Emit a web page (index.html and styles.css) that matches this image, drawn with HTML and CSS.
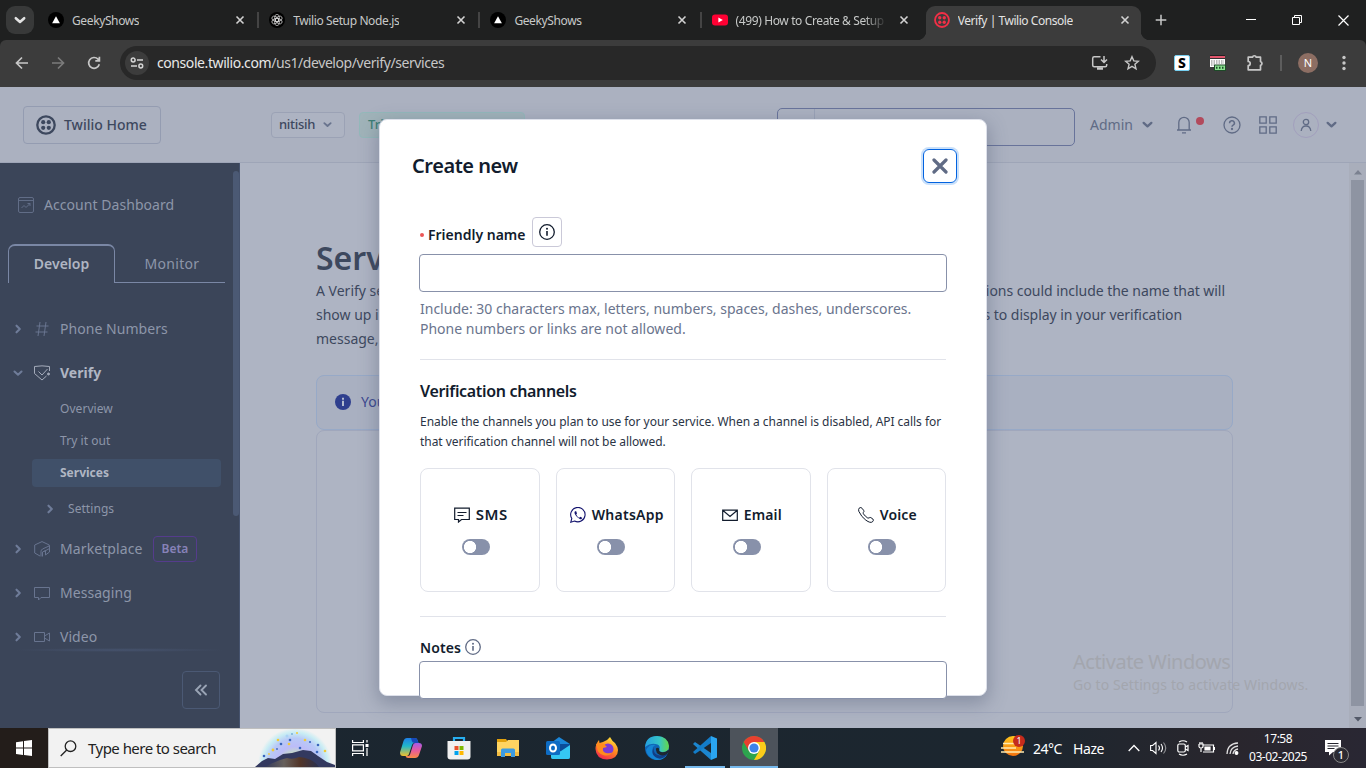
FILE: index.html
```html
<!DOCTYPE html>
<html lang="en">
<head>
<meta charset="utf-8">
<title>Verify | Twilio Console</title>
<link rel="stylesheet" href="styles.css">
</head>
<body>
<svg class="defs" aria-hidden="true">
  <symbol id="x" viewBox="0 0 10 10"><path d="M1.500 1.500l7 7M8.500 1.500l-7 7" fill="none" stroke="currentColor" stroke-width="1.600"/></symbol>
  <symbol id="down" viewBox="0 0 10 10"><path d="M1.500 3.500L5 6.700l3.500-3.200" fill="none" stroke="currentColor" stroke-width="2.100" stroke-linecap="round" stroke-linejoin="round"/></symbol>
  <symbol id="right" viewBox="0 0 10 10"><path d="M3.500 1.700L6.800 5 3.500 8.300" fill="none" stroke="currentColor" stroke-width="2.100" stroke-linecap="round" stroke-linejoin="round"/></symbol>
  <symbol id="info" viewBox="0 0 16 16"><circle cx="8" cy="8" r="7.300" fill="none" stroke="currentColor" stroke-width="1.300"/><circle cx="8" cy="4.800" r="1" fill="currentColor"/><path d="M8 7v4.700" stroke="currentColor" stroke-width="1.600"/></symbol>
  <symbol id="twilio" viewBox="0 0 20 20"><circle cx="10" cy="10" r="8.700" fill="none" stroke="currentColor" stroke-width="2.300"/><g fill="currentColor"><circle cx="7.200" cy="7.200" r="2.100"/><circle cx="12.800" cy="7.200" r="2.100"/><circle cx="7.200" cy="12.800" r="2.100"/><circle cx="12.800" cy="12.800" r="2.100"/></g></symbol>
  <symbol id="geeky" viewBox="0 0 16 16"><circle cx="8" cy="8" r="8" fill="#000"/><path d="M8 4.300l3.900 6.900H4.100z" fill="#fff"/></symbol>
</svg>

<div class="tabstrip">
  <div class="tab-search"><svg width="12" height="12"><use href="#down"/></svg></div>
  <div class="tab"><svg class="fav"><use href="#geeky"/></svg><span>GeekyShows</span><svg class="tab-x"><use href="#x"/></svg></div>
  <div class="tab"><svg class="fav" viewBox="0 0 16 16"><circle cx="8" cy="8" r="8" fill="#000"/><g fill="none" stroke="#d8d8d8" stroke-width=".7"><ellipse cx="8" cy="6" rx="2.400" ry="3.700" transform="rotate(60 8 8)"/><ellipse cx="8" cy="6" rx="2.400" ry="3.700" transform="rotate(120 8 8)"/><ellipse cx="8" cy="6" rx="2.400" ry="3.700" transform="rotate(180 8 8)"/><ellipse cx="8" cy="6" rx="2.400" ry="3.700" transform="rotate(240 8 8)"/><ellipse cx="8" cy="6" rx="2.400" ry="3.700" transform="rotate(300 8 8)"/><ellipse cx="8" cy="6" rx="2.400" ry="3.700"/></g></svg><span>Twilio Setup Node.js</span><svg class="tab-x"><use href="#x"/></svg></div>
  <div class="tab"><svg class="fav"><use href="#geeky"/></svg><span>GeekyShows</span><svg class="tab-x"><use href="#x"/></svg></div>
  <div class="tab last"><svg class="fav" viewBox="0 0 16 16"><rect y="2.500" width="16" height="11" rx="3" fill="#f03"/><path d="M6.400 5.500v5L10.800 8z" fill="#fff"/></svg><span class="fade">(499) How to Create &amp; Setup</span><svg class="tab-x"><use href="#x"/></svg></div>
  <div class="tab active"><svg class="fav red"><use href="#twilio" width="16" height="16"/></svg><span>Verify | Twilio Console</span><svg class="tab-x"><use href="#x"/></svg></div>
  <svg class="plus" viewBox="0 0 12 12"><path d="M6 .7v10.600M.7 6h10.600" stroke="#c7c7c7" stroke-width="1.500"/></svg>
  <div class="win-buttons">
    <svg width="10" height="10"><path d="M0 4.500h10" stroke="#fff"/></svg>
    <svg width="10" height="10"><path d="M.5 2.500h7v7h-7zM2.500 2.500v-2h7v7h-2" fill="none" stroke="#fff"/></svg>
    <svg width="11" height="11"><path d="M.5.5l10 10M10.500.5l-10 10" stroke="#fff" stroke-width="1.200"/></svg>
  </div>
</div>

<div class="toolbar">
  <svg class="nav-i" viewBox="0 0 16 16"><path d="M14 8H3M8 2.500L2.500 8 8 13.500"/></svg>
  <svg class="nav-i dim" viewBox="0 0 16 16"><path d="M2 8h11M8 2.500L13.500 8 8 13.500"/></svg>
  <svg class="nav-i" viewBox="0 0 16 16"><path d="M13.300 9.300A5.400 5.400 0 1 1 12 4.200l1.300 1.300M13.400 1.800v4H9.300"/></svg>
  <div class="address">
    <div class="site"><svg width="14" height="12" viewBox="0 0 14 12" fill="none" stroke="#d5d5d5" stroke-width="1.500"><circle cx="3.200" cy="3" r="1.900"/><path d="M7 3h6M1 9h6"/><circle cx="10.800" cy="9" r="1.900"/></svg></div>
    <div class="url">console.twilio.com<span>/us1/develop/verify/services</span></div>
    <svg width="18" height="16" viewBox="0 0 18 16" fill="none" stroke="#c7c7c7" stroke-width="1.500"><path d="M9.500 1.700H3.200Q1.700 1.700 1.700 3.200v7q0 1.500 1.500 1.500h11q1.500 0 1.500-1.500V9M13 1v6.300M10 4.500l3 3 3-3"/><path d="M6 13.500h6" stroke-width="2.500"/></svg>
    <svg width="16" height="16" viewBox="0 0 16 16" fill="none" stroke="#c7c7c7" stroke-width="1.400"><path d="M8 1.700l1.800 4.200 4.600.4-3.500 3 1.100 4.500L8 11.400l-4 2.400 1.100-4.500-3.500-3 4.600-.4z"/></svg>
  </div>
  <div class="ext-s">S</div>
  <svg class="ext-c" width="16" height="16"><rect width="15" height="4" fill="#e2566d"/><path d="M0 .5h15" stroke="#222"/><path d="M0 3.500h15" stroke="#333"/><rect y="4" width="15" height="8" fill="#fff"/><path d="M1 6h13M1 8h13M1 10h3" stroke="#777" stroke-dasharray="1.500 1"/><rect x="4" y="9.500" width="12" height="6.500" fill="#1e4a28"/><rect x="5" y="10.500" width="10" height="4.500" fill="#8be28f"/><path d="M6 12.700h8" stroke="#1e4a28" stroke-width="2" stroke-dasharray="1.500 1.500"/></svg>
  <svg class="puzzle" width="18" height="18" viewBox="0 0 18 18"><path d="M2.200 3.200h4.300a1.900 1.900 0 0 1 3.700 0h4.300v4.400a1.900 1.900 0 0 1 0 3.700v4.500H2.200v-4.300a2 2 0 0 0 0-4z" fill="none" stroke="#c7c7c7" stroke-width="1.700" stroke-linejoin="round"/></svg>
  <i class="bar"></i>
  <div class="me">N</div>
  <svg class="dots" width="4" height="16" fill="#c7c7c7"><circle cx="2" cy="2.500" r="1.700"/><circle cx="2" cy="8" r="1.700"/><circle cx="2" cy="13.500" r="1.700"/></svg>
</div>

<div class="page">
  <header class="top">
    <div class="home"><svg width="20" height="20"><use href="#twilio"/></svg>Twilio Home</div>
    <div class="account">nitisih<svg width="9" height="9"><use href="#down"/></svg></div>
    <div class="trial">Trial</div>
    <div class="search"><i></i></div>
    <div class="admin">Admin<svg width="11" height="11"><use href="#down"/></svg></div>
    <svg class="bell" width="28" height="20" viewBox="0 0 28 20"><path d="M1 15h14M2.800 15V7.500a5.200 5.200 0 0 1 10.400 0V15M6 17.800h4" fill="none" stroke="currentColor" stroke-width="1.300"/><circle cx="24" cy="6" r="4" fill="#b24a5c"/></svg>
    <svg class="help" width="18" height="18" viewBox="0 0 18 18" fill="none" stroke="currentColor" stroke-width="1.300"><circle cx="9" cy="9" r="8"/><path d="M6.600 7.200a2.400 2.400 0 1 1 3.500 2q-1.100.6-1.100 1.600" stroke-width="1.500"/><circle cx="9" cy="13" r=".5"/></svg>
    <svg class="apps" width="18" height="18" fill="none" stroke="currentColor" stroke-width="1.300"><path d="M.8.8h6.400v6.400H.8zM10.800.8h6.400v6.400h-6.400zM.8 10.800h6.400v6.400H.8zM10.800 10.800h6.400v6.400h-6.400z"/></svg>
    <div class="user"><svg width="14" height="14" viewBox="0 0 14 14" fill="none" stroke="currentColor" stroke-width="1.300"><circle cx="7" cy="4" r="2.700"/><path d="M2.200 13q.5-5 4.800-5t4.800 5"/></svg></div>
    <svg class="user-down" width="11" height="11"><use href="#down"/></svg>
  </header>

  <div class="cols">
    <aside class="side">
      <div class="dash"><svg width="16" height="16" fill="none" stroke="currentColor"><rect x=".5" y=".5" width="15" height="15" rx="1.500"/><path d="M1 3.500h14M3.500 11l2.500-2.500 2 2 4-4M9.500 6.500H12V9"/></svg><span>Account Dashboard</span></div>
      <div class="side-tabs"><div class="on">Develop</div><div class="off">Monitor</div></div>
      <nav>
        <div class="row"><svg class="chev"><use href="#right"/></svg><svg class="ic" viewBox="0 0 16 16"><path d="M6 1L4 15M12 1l-2 14M2.500 5h12M1.500 11h12"/></svg><span>Phone Numbers</span></div>
        <div class="row open"><svg class="chev"><use href="#down"/></svg><svg class="ic lit" viewBox="0 0 16 16"><path d="M15.500 6V1.500Q8 .2.500 1.500V8.500L8 15l4.500-4M4.500 6.500L8 10l5.500-6"/><circle cx="14.500" cy="9" r="1" fill="currentColor"/></svg><span>Verify</span></div>
        <div class="sub">Overview</div>
        <div class="sub">Try it out</div>
        <div class="sub sel">Services</div>
        <div class="sub more"><svg class="chev"><use href="#right"/></svg>Settings</div>
        <div class="row"><svg class="chev"><use href="#right"/></svg><svg class="ic" viewBox="0 0 16 16"><path d="M6 15l-5.300-3V4L8 .6 15.300 4v1.500M7 15.500V10.500Q7 9 8.500 8L15.500 4.800V11l-4 3V9.500L8.500 11v4.500M15.500 7.500L10 10.500"/></svg><span class="mk">Marketplace</span><b class="beta">Beta</b></div>
        <div class="row"><svg class="chev"><use href="#right"/></svg><svg class="ic" viewBox="0 0 16 16"><path d="M.5 2.500h15v10H7L4.500 15v-2.500h-4z"/></svg><span>Messaging</span></div>
        <div class="row"><svg class="chev"><use href="#right"/></svg><svg class="ic" viewBox="0 0 16 16"><path d="M.5 3.500h10v9H.5zM10.500 7l5-3v8l-5-3"/></svg><span>Video</span></div>
      </nav>
      <i class="edge"></i>
      <div class="collapse"><svg width="14" height="12" viewBox="0 0 14 12"><path d="M6.500 1.500L2 6l4.500 4.500M12 1.500L7.500 6l4.500 4.500" fill="none" stroke="#9aa4b5" stroke-width="1.900" stroke-linecap="round"/></svg></div>
      <i class="thumb"></i>
    </aside>

    <main class="main">
      <h1>Services</h1>
      <div class="line"><span>A Verify se</span><span class="r1">ions could include the name that will</span></div>
      <div class="line"><span>show up i</span><span class="r2">s to display in your verification</span></div>
      <div class="line"><span>message,</span></div>
      <div class="alert"><svg width="16" height="16"><circle cx="8" cy="8" r="8" fill="#2f3f8e"/><path d="M8 6.800V12M8 3.800v2" stroke="#b4bccf" stroke-width="2"/></svg>You</div>
      <div class="empty"></div>
    </main>
    <div class="scroll"><svg width="10" height="5"><path d="M5 0l4 4.500H1z" fill="#7b8190"/></svg><i></i><svg width="10" height="5"><path d="M1 0h8L5 4.500z" fill="#535968"/></svg></div>
  </div>

  <section class="modal">
    <div class="m-head"><h2>Create new</h2><div class="close"><svg width="16" height="16"><path d="M2 2l12 12M14 2L2 14" stroke="#606b85" stroke-width="3.200" stroke-linecap="round"/></svg></div></div>
    <div class="m-body">
      <div class="label first"><i class="req"></i><span>Friendly name</span><div class="info-btn"><svg width="16" height="16"><use href="#info"/></svg></div></div>
      <div class="input"></div>
      <p class="help-text">Include: 30 characters max, letters, numbers, spaces, dashes, underscores.<br>Phone numbers or links are not allowed.</p>
      <hr>
      <h3>Verification channels</h3>
      <p class="desc">Enable the channels you plan to use for your service. When a channel is disabled, API calls for<br>that verification channel will not be allowed.</p>
      <div class="cards">
        <div class="card"><div class="ch sms"><svg width="16" height="16" viewBox="0 0 16 16"><path d="M.7 1.200h14.600v11.300H7.500L4.500 15v-2.500H.7zM3.500 5.500h9M3.500 8.500h6"/></svg><span>SMS</span></div><i class="toggle"></i></div>
        <div class="card"><div class="ch wa"><svg width="16" height="16" viewBox="0 0 16 16" class="navy"><path d="M.8 15.200l1-3.700A7.200 7.200 0 1 1 4.500 14z" stroke-width="1.100"/><path d="M5.200 4.200q-1.500 1 .2 3.800t4.700 4.300q1.700.2 2.100-1.500l-2-1.100-1 1Q7.500 10 6.200 7.400l.8-1-.8-2.200z" fill="#14146e" stroke="none"/></svg><span>WhatsApp</span></div><i class="toggle"></i></div>
        <div class="card"><div class="ch"><svg width="16" height="16" viewBox="0 0 16 16"><path d="M.7 3.200h14.600v10.100H.7zM1 3.500l7 6 7-6"/></svg><span>Email</span></div><i class="toggle"></i></div>
        <div class="card"><div class="ch"><svg width="16" height="16" viewBox="0 0 16 16"><path d="M1 1.300Q3-.5 4.300 1.500l1.500 2.200q.5 1-.5 1.700-1 .8 2 3.700t3.800 1.900q.7-1 1.700-.4l2.100 1.400q1.300 1.100-.5 2.900-2 1.500-6.500-1.700T.8 4.300Q.3 2.300 1 1.300z" stroke-width="1"/></svg><span>Voice</span></div><i class="toggle"></i></div>
      </div>
      <hr class="second">
      <div class="label notes"><span>Notes</span><svg width="16" height="16"><use href="#info"/></svg></div>
      <div class="input"></div>
    </div>
  </section>

  <div class="watermark"><div>Activate Windows</div><p>Go to Settings to activate Windows.</p></div>
</div>

<div class="taskbar">
  <div class="start"><svg width="16" height="16" fill="#fff"><path d="M0 2.200L7 1.200v6.400H0zM8 1.100L16 0v7.600H8zM0 8.500h7v6.400l-7-1zM8 8.500h8V16l-8-1.100z"/></svg></div>
  <div class="task-search">
    <svg width="17" height="17" viewBox="0 0 17 17" fill="none" stroke="#222" stroke-width="1.300"><circle cx="10.500" cy="6.200" r="5.300"/><path d="M6.700 10L.7 16"/></svg>
    <span>Type here to search</span>
    <svg class="hills" width="80" height="38" viewBox="0 0 80 38">
      <defs><radialGradient id="glow" gradientUnits="userSpaceOnUse" cx="40" cy="36" r="37"><stop offset=".3" stop-color="#c8ddc0"/><stop offset=".5" stop-color="#bcbcf8"/><stop offset=".72" stop-color="#b8c9f7"/><stop offset=".88" stop-color="#c9edf4"/><stop offset="1" stop-color="#f1f2f2"/></radialGradient><linearGradient id="hill"><stop offset="0" stop-color="#343a5a"/><stop offset=".35" stop-color="#67605c"/><stop offset=".65" stop-color="#523528"/><stop offset="1" stop-color="#29304e"/></linearGradient></defs>
      <path d="M2 38Q4 0 40 0t38 38z" fill="url(#glow)"/>
      <path d="M0 38l7-6 6-3 7 1 8-5 9-1 11-3 8 1 7 5 9 6 8 3v2z" fill="#33395f"/>
      <path d="M10 38q12-7 22-9 6 2 12-1 14 1 20 10z" fill="url(#hill)"/>
      <g fill="#3b66bd"><circle cx="9" cy="27" r="1.300"/><circle cx="26" cy="15" r="1.300"/><circle cx="35" cy="11" r="1.300"/><circle cx="45" cy="19" r="1.300"/><circle cx="55" cy="13" r="1.100"/><circle cx="63" cy="16" r="1.300"/><circle cx="62" cy="23" r="1.300"/><circle cx="22" cy="20" r=".9"/><circle cx="37" cy="5" r="1" fill="#78b2d8"/><circle cx="32" cy="7" r="1.500" fill="#a9d3f5"/></g>
      <g fill="#f0c93a"><circle cx="18" cy="21" r="1.400"/><circle cx="23" cy="11" r="1.300"/><circle cx="34" cy="15" r="1.300"/><circle cx="50" cy="11" r="1.300"/><circle cx="70" cy="22" r="1.300"/><circle cx="14" cy="25" r=".9"/><circle cx="42" cy="4" r="1"/></g>
    </svg>
  </div>
  <div class="apps-row">
    <div><svg width="17" height="16" fill="none" stroke="#fff" stroke-width="1.200"><path d="M.6 0v2.500h10.800V0M.6 4.800h10.800v6H.6zM.6 16v-2.500h10.800V16M15 0v2.500M15 8v8"/><path d="M13.500 5.500h3" stroke-width="3"/></svg></div>
    <div class="cop"><svg width="24" height="24" viewBox="0 0 24 24"><defs><linearGradient id="c1" x1="0" y1="0" x2="0" y2="1"><stop offset="0" stop-color="#1f7fe8"/><stop offset=".45" stop-color="#20b7c9"/><stop offset="1" stop-color="#f2c12c"/></linearGradient><linearGradient id="c2" x1="0" y1="0" x2="0" y2="1"><stop offset="0" stop-color="#a45be8"/><stop offset=".5" stop-color="#e85b9c"/><stop offset="1" stop-color="#fb8a45"/></linearGradient></defs><path d="M8 2h8q2 0 2.500 2l1 3h-4q-2 0-2.500 2L10 18Q9.500 20 7.500 20H4q-3 0-3-3.500L4.500 5Q5.500 2 8 2z" fill="url(#c1)"/><path d="M12 2h4q2 0 2.500 2l1 3h-4q-2 0-2.700-2z" fill="#1748b8"/><path d="M20 7q3 0 3 3l-3 9q-1 3-4 3H9q-2 0-2.500-2h2.700q1.500 0 2-2L14 9q.5-2 2.500-2z" fill="url(#c2)"/></svg></div>
    <div><svg width="24" height="24" viewBox="0 0 24 24"><path d="M7 6V2h10v4" fill="none" stroke="#27aef0" stroke-width="2.200"/><path d="M.5 5h23v15.500q0 3-3 3h-17q-3 0-3-3z" fill="#f0f0f0"/><path d="M7.500 10h4v4h-4z" fill="#e8512b"/><path d="M12.500 10h4v4h-4z" fill="#7eb900"/><path d="M7.500 15h4v4h-4z" fill="#00a2ee"/><path d="M12.500 15h4v4h-4z" fill="#ffb800"/></svg></div>
    <div><svg width="22" height="20" viewBox="0 0 22 20"><path d="M0 1h9l2 3H0z" fill="#e2a10d"/><path d="M0 4h9l2-2h11v16H0z" fill="#ffd461"/><path d="M0 14h22v4H0z" fill="#f3bd43"/><path d="M4 19v-7q0-1.500 1.500-1.500h11q1.500 0 1.500 1.500v7h-4v-4H8v4z" fill="#3d9be0"/></svg></div>
    <div class="cop"><svg width="24" height="24" viewBox="0 0 24 24"><path d="M13 1l11 7v13q0 2-2 2H7q-2 0-2-2V7z" fill="#1a86d9"/><path d="M10 8h14v7l-8 5-5-3z" fill="#0b4c99"/><path d="M5 19l10-4 9-6v12q0 2-2 2H7q-2 0-2-2z" fill="#35c7f3"/><rect x="0" y="5" width="14" height="14" rx="1.500" fill="#0e6cc4"/><ellipse cx="7" cy="12" rx="3" ry="3.500" fill="none" stroke="#fff" stroke-width="2"/></svg></div>
    <div><svg width="24" height="24" viewBox="0 0 24 24"><defs><linearGradient id="ff" x1=".8" y1="0" x2=".3" y2="1"><stop offset="0" stop-color="#ffe83d"/><stop offset=".5" stop-color="#ff8a1f"/><stop offset="1" stop-color="#f2264f"/></linearGradient></defs><path d="M15 1q2 4 5 6 3 4 3 7 0 9-11 9.500Q1 23 .5 13 .5 8 4 4l.5 3L8 6q4-1 7-5z" fill="url(#ff)"/><circle cx="13" cy="13" r="5.500" fill="#7b3ad6"/><path d="M1 8l3-1 5 1 3 3-4 1q-1 4 3 5t7-1q-4 5-10 3T2 11z" fill="#ff8b1e"/></svg></div>
    <div class="cop"><svg width="24" height="24" viewBox="0 0 24 24"><defs><linearGradient id="ed"><stop offset="0" stop-color="#249fe0"/><stop offset=".6" stop-color="#36c5c7"/><stop offset="1" stop-color="#65d847"/></linearGradient></defs><circle cx="12" cy="12" r="12" fill="#0f64b5"/><path d="M0 11Q1 0 12 0q11 .5 12 10 0 6-6.500 6-4 0-3-3 1-3-2-4.500Q6 6 0 11z" fill="url(#ed)"/><path d="M8 11q-2 6 3 10 5 2 11-2-4 6-12 4.800Q2 21 1 14q3-6 10-5-2 .5-3 2z" fill="#1484d4"/><path d="M9 11q-1.500 6 4 8 4 1.500 8-1.500l1.500.5Q17 25 11 21.500T9 11z" fill="#123e85"/><path d="M14.300 13q-1 3 3 3.300 3 .3 6-2.300l1.200 1-2.500 3q-4 2.500-8 .5t-2.700-6.500q2-1 3 1z" fill="#1e2830"/></svg></div>
    <div class="run"><svg width="24" height="24" viewBox="0 0 24 24"><path d="M0 8l2-2 16 11v7z" fill="#1c86cf"/><path d="M0 16l2 2 16-11V0z" fill="#137cc8"/><path d="M18 0l6 2.500v19L18 24z" fill="#2aa5f1"/></svg></div>
    <div class="run cur"><svg width="24" height="24" viewBox="0 0 24 24"><circle cx="12" cy="12" r="12" fill="#2da44e"/><path d="M1.600 6A12 12 0 0 1 22.400 6H12l-5 9z" fill="#e8402f"/><path d="M22.400 6A12 12 0 0 1 12 24l5.200-9L17 6z" fill="#fccb1a"/><path d="M12 6h10.400L17 13z" fill="#fccb1a"/><circle cx="12" cy="12" r="6" fill="#fff"/><circle cx="12" cy="12" r="4.600" fill="#3c82ea"/></svg></div>
  </div>
  <div class="tray">
    <svg class="weather" width="25" height="22" viewBox="0 0 25 22"><defs><linearGradient id="sun" x1="0" y1="0" x2="0" y2="1"><stop offset="0" stop-color="#ffc61d"/><stop offset="1" stop-color="#f3720f"/></linearGradient></defs><circle cx="12" cy="11" r="10" fill="url(#sun)"/><path d="M2 8.500h13M0 13h15M0 17h23" stroke="#ffeab0" stroke-width="1.700"/><circle cx="18" cy="6" r="6" fill="#c42b1c"/><text x="15.500" y="9.300" fill="#fff" font-size="9" font-family="Noto Sans">1</text></svg>
    <span class="temp">24°C</span><span class="haze">Haze</span>
    <svg class="t1" width="12" height="8"><path d="M.7 7L6 1.500 11.300 7" fill="none" stroke="#fff" stroke-width="1.300"/></svg>
    <svg class="t2" width="17" height="14" fill="none" stroke="#fff" stroke-width="1.100"><path d="M.6 4.500h2L6 1.500v11L2.600 9.500h-2zM8.500 4.500q2 2.500 0 5M11 3q3 4 0 8"/><path d="M13.500 1.500q4.500 5.500 0 11" opacity=".5"/></svg>
    <svg class="t3" width="12" height="16" fill="none" stroke="#fff" stroke-width="1.200"><rect x=".8" y="4" width="7.500" height="8" rx="1.500"/><path d="M8.300 7l2.700-1.500v5L8.300 9M2 2q4-2.500 8 0M2 14q4 2.500 8 0"/></svg>
    <svg class="t4" width="17" height="14" fill="none" stroke="#fff" stroke-width="1.200"><path d="M5 4h10.500v7H5M16.500 6v3M1 3v2.500q0 1.500 2 1.500t2-1.500V3H1M2 1v2M4 1v2M3 7v4"/><path d="M7 6h5v3H7z" fill="#fff"/></svg>
    <svg class="t5" width="13" height="13" fill="none" stroke="#fff" stroke-width="1.300"><path d="M1 12Q1.500 1.500 12 1M4 12q.5-7 8-8M7 12q.5-4 5-5" stroke-opacity=".85"/><circle cx="10.500" cy="11" r="1.300" fill="#fff"/></svg>
    <div class="clock">17:58<br>03-02-2025</div>
    <div class="note"><svg width="16" height="16"><path d="M0 0h16v12H8l-4 3.500V12H0z" fill="#fff"/><path d="M2.500 3.500h11M2.500 6h11M2.500 8.500h7" stroke="#26262f"/></svg><b>1</b></div>
  </div>
</div>
</body>
</html>
```
FILE: styles.css
```css
* { box-sizing: border-box; }
body {
  margin: 0; width: 1366px; height: 768px; overflow: hidden;
  display: flex; flex-direction: column;
  font: 14px "Noto Sans", sans-serif;
}
h1, h2, h3, p, hr { margin: 0; }
svg { display: block; flex: none; }
i { display: block; }
.defs { position: absolute; width: 0; height: 0; }

/* browser tabs */
.tabstrip { display: flex; height: 40px; background: #1f2020; color: #c7c9c8; font-size: 12px; letter-spacing: -.38px; flex: none; }
.tab-search { width: 28px; height: 28px; margin: 6px 4px 0 6px; border-radius: 9px; background: #383939; color: #e3e3e3; display: grid; place-items: center; }
.tab { position: relative; display: flex; align-items: center; width: 221.2px; padding: 0 14.200px 0 10px; }
.tab span { margin-left: 8px; margin-right: auto; white-space: nowrap; overflow: hidden; }
.tab:not(.last):not(.active)::after { content: ""; position: absolute; right: 0; top: 12px; width: 2px; height: 16px; background: #444; }
.tab .fade { width: 151px; -webkit-mask-image: linear-gradient(90deg, #000 85%, transparent); mask-image: linear-gradient(90deg, #000 85%, transparent); }
.fav { width: 16px; height: 16px; }
.fav.red { color: #f22f46; }
.tab-x { width: 10px; height: 10px; color: #d2d2d2; }
.tab.active { width: 215px; margin: 6px 0 0 3px; height: 34px; padding: 0 11px 6px 8px; border-radius: 9px 9px 0 0; background: #3c3c3c; color: #e3e3e3; letter-spacing: -.46px; }
.tab.active::before, .tab.active::after { content: ""; position: absolute; bottom: 0; width: 9px; height: 9px; }
.tab.active::before { left: -9px; background: radial-gradient(circle at 0 0, transparent 9px, #3c3c3c 9.5px); }
.tab.active::after { right: -9px; background: radial-gradient(circle at 100% 0, transparent 9px, #3c3c3c 9.5px); }
.plus { width: 12px; height: 12px; margin: 14px 0 0 14px; }
.win-buttons { display: flex; align-items: center; gap: 36px; margin-left: auto; padding-right: 17px; }

/* browser toolbar */
.toolbar { display: flex; align-items: center; height: 47px; background: #3c3c3c; padding: 0 20px 1px 14px; flex: none; border-radius: 6px 6px 0 0; box-shadow: 0 -8px 0 0 #1f2020; clip-path: inset(0); }
.tabstrip { position: relative; }
.nav-i { width: 16px; height: 16px; margin-right: 20px; fill: none; stroke: #c7c7c7; stroke-width: 1.7; }
.nav-i:nth-child(3) { margin-right: 18px; }
.nav-i.dim { stroke: #7b7b7b; }
.address { display: flex; align-items: center; width: 1036px; height: 34px; padding: 0 16px 0 5px; border-radius: 17px; background: #282828; }
.site { width: 24px; height: 24px; border-radius: 50%; background: #3c3c3c; display: grid; place-items: center; }
.url { margin: 0 auto 1px 8px; color: #e8e8e8; letter-spacing: -.42px; }
.url span { color: #c7c7c7; }
.address > svg:last-child { margin-left: 15px; }
.ext-s { width: 16px; height: 16px; margin-left: 18px; border: 1px solid #76cff0; border-radius: 2px; background: #fff; color: #000; font: 800 14px/14px "Noto Sans", sans-serif; text-align: center; }
.ext-c { margin-left: 20px; }
.puzzle { margin-left: 20px; }
.bar { width: 2px; height: 16px; margin-left: 16px; background: #5d5d5d; }
.me { width: 20px; height: 20px; margin-left: 16px; border-radius: 50%; background: #8d6e63; color: #fff; font-size: 11px; line-height: 20px; text-align: center; }
.dots { margin-left: 24px; }

/* console page */
.page { position: relative; height: 641px; flex: none; display: flex; flex-direction: column; background: #aeb4c3; overflow: hidden; }
.top { display: flex; align-items: center; height: 76px; flex: none; padding-left: 23px; background: #abb1c0; border-bottom: 1px solid #9ea5b7; color: #606b85; }
.home { display: flex; align-items: center; gap: 8px; width: 138px; height: 38px; padding-left: 12px; border: 1px solid #949cb1; border-radius: 4px; color: #3d485e; font-weight: 500; }
.account { display: flex; align-items: center; justify-content: space-between; width: 74px; height: 26px; margin-left: 110px; padding: 0 12px 1px 7px; border: 1px solid #9ba2b5; border-radius: 4px; background: #adb3c2; color: #3d485e; font-size: 13px; font-weight: 500; letter-spacing: -.3px; }
.account svg { color: #69748e; margin-top: 1px; }
.trial { width: 166px; height: 26px; margin-left: 14px; padding: 2px 8px; border: 1px solid #93b8ba; border-radius: 4px; background: #a0b3b9; color: #3c7d74; font-size: 13px; font-weight: 500; }
.search { width: 298px; height: 38px; margin: 4px 0 0 252px; border: 1px solid #68739a; border-radius: 5px; }
.search i { width: 37px; height: 36px; border-right: 1px solid #9aa2b6; }
.admin { display: flex; align-items: center; gap: 9px; margin-left: 15px; width: 86px; }
.bell { margin-left: 0; }
.help { margin-left: 19px; }
.apps { margin-left: 18px; }
.user { display: grid; place-items: center; width: 26px; height: 26px; margin-left: 16px; border: 1px solid #a29fbd; border-radius: 50%; }
.user-down { margin-left: 7px; }
.cols { display: flex; flex: 1; min-height: 0; }

/* sidebar */
.side { position: relative; width: 240px; background: #3b4559; border-right: 1px solid #46536e; color: #8d96a9; }
.dash { display: flex; align-items: center; gap: 10px; height: 20px; margin: 32px 0 29px 18px; }
.dash span, .row span { margin-top: -2px; letter-spacing: .05px; }
.dash svg { color: #616d87; }
.side-tabs { display: flex; height: 39px; margin-left: 8px; }
.side-tabs div { text-align: center; line-height: 39px; }
.side-tabs .on { width: 107px; border: 1px solid #7a87a5; border-top-width: 2px; border-bottom: 0; border-radius: 7px 7px 0 0; color: #b0b6c3; font-weight: 600; line-height: 35px; }
.side-tabs .off { width: 110px; border-bottom: 1px solid #7a87a5; padding-left: 4px; letter-spacing: .3px; }
.side nav { height: 371px; padding-top: 24px; margin-bottom: -6px; overflow: hidden; }
.row { display: flex; align-items: center; height: 44px; padding-left: 13px; }
.chev { width: 10px; height: 10px; margin-right: 11px; color: #6f7c99; }
.ic { width: 16px; height: 16px; margin-right: 10px; fill: none; stroke: currentColor; color: #68748f; }
.ic.lit { color: #a4abba; }
.open { font-weight: 700; color: #b0b6c3; }
.sub { height: 28px; margin: 4px 18px 0 32px; padding-left: 28px; line-height: 28px; font-size: 12px; letter-spacing: .06px; }
.open + .sub { margin-top: 0; }
.sub.sel { border-radius: 4px; background: #405069; color: #b0b6c3; font-weight: 700; line-height: 27px; letter-spacing: 0; }
.sub.more { display: flex; align-items: center; margin-top: 8px; margin-bottom: 4px; padding-left: 13px; }
.sub.more .chev { margin-right: 13px; }
.row .mk { letter-spacing: .1px; }
.beta { margin-left: 10px; padding: 0 8px; height: 26px; border: 1px solid #553c8c; border-radius: 4px; color: #8782b8; font-size: 12px; font-weight: 600; line-height: 23px; }
.edge { height: 4px; margin: 0 12px 0 12px; background: radial-gradient(ellipse at center, #46536e, transparent 70%); }
.collapse { display: grid; place-items: center; width: 38px; height: 38px; margin: 19px 0 0 182px; border: 1px solid #4b5974; border-radius: 4px; }
.thumb { position: absolute; right: 0; top: 8px; width: 6px; height: 345px; border-radius: 3px; background: #4b5974; }

/* main column */
.main { width: 1109px; padding: 75px 116px 0 76px; color: #3d485e; }
.main h1 { font-size: 32px; line-height: 40px; font-weight: 600; margin-bottom: 1px; }
.line { display: flex; justify-content: space-between; height: 24px; line-height: 24px; white-space: nowrap; }
.r1 { margin-right: 8px; letter-spacing: -.04px; }
.r2 { margin-right: 51px; letter-spacing: -.05px; }
.alert { display: flex; align-items: center; gap: 10px; height: 55px; margin-top: 24px; padding: 0 0 2px 18px; border: 1px solid #97a9c7; border-radius: 8px; background: #a9b0c1; color: #3a478f; }
.empty { height: 283px; border: 1px solid #a0a7bc; border-radius: 8px; }
.scroll { display: flex; flex-direction: column; align-items: center; width: 17px; padding: 7px 0 6px; background: #a9aebb; }
.scroll i { width: 13px; height: 526px; margin: 5px 0 auto; background: #8e94a2; }

/* dialog over the dimmed page */
.modal { position: absolute; left: 379px; top: 32px; width: 608px; height: 577px; border: 1px solid #dde0ea; border-radius: 8px; background: #fff; color: #121c2d; box-shadow: 0 6px 18px 2px rgba(75, 86, 113, .38); }
.m-head { display: flex; justify-content: space-between; align-items: center; height: 92px; padding: 0 29px 0 32px; }
.m-head h2 { margin-top: -2px; font-size: 20px; font-weight: 600; letter-spacing: -.45px; }
.close { display: grid; place-items: center; width: 34px; height: 34px; border: 1px solid #0263e0; border-radius: 6px; box-shadow: 0 0 0 2px #c9e0fa; }
.m-body { padding: 0 40px; }
.label { display: flex; align-items: center; font-weight: 600; }
.label.first { height: 30px; margin-top: 5px; }
.label.first span { padding-top: 5px; }
.req { width: 4px; height: 4px; margin: 6px 4px 0 0; border-radius: 50%; background: #eb5656; }
.info-btn { display: grid; place-items: center; width: 30px; height: 30px; margin-left: 7px; border: 1px solid #cac9d8; border-radius: 4px; }
.input { height: 38px; margin: 7px -1px 0; border: 1px solid #8891aa; border-radius: 4px; background: #fff; }
.help-text { margin-top: 7px; color: #6a748d; line-height: 20px; white-space: nowrap; }
hr { height: 1px; border: 0; margin-top: 20px; background: #e1e3ea; }
.modal h3 { margin-top: 21px; font-size: 16px; line-height: 20px; font-weight: 600; letter-spacing: -.33px; }
.desc { margin-top: 11px; font-size: 12px; line-height: 20px; letter-spacing: -.04px; white-space: nowrap; color: #2b3445; }
.cards { display: grid; grid-template-columns: repeat(4, 1fr); gap: 16px; margin-top: 16px; }
.card { display: flex; flex-direction: column; align-items: center; height: 124px; padding-top: 36px; border: 1px solid #e1e3ea; border-radius: 8px; }
.ch { display: flex; align-items: center; gap: 6px; height: 20px; margin-left: 2px; font-weight: 600; letter-spacing: .15px; }
.ch span { margin-top: -2px; }
.ch svg { fill: none; stroke: #121c2d; stroke-width: 1.2; }
.ch svg.navy { stroke: #14146e; }
.sms { letter-spacing: .45px; font-size: 15px; }
.wa { margin-left: 3px; letter-spacing: .25px; }
.toggle { width: 28px; height: 16px; margin: 14px 8px 0 0; border-radius: 8px; background: radial-gradient(circle at 8px 8px, #fff 5.7px, #8891aa 6.5px); }
hr.second { margin-top: 24px; }
.label.notes { gap: 4px; height: 20px; margin-top: 20px; }
.label.notes span { letter-spacing: .1px; }
.notes svg { color: #606b85; }
.notes + .input { margin-top: 4px; }
.watermark { position: absolute; left: 1073px; top: 561px; color: #a3a6ae; white-space: nowrap; }
.watermark div { font-size: 20px; line-height: 28px; letter-spacing: -.5px; }
.watermark p { line-height: 18px; letter-spacing: .1px; }

/* taskbar */
.taskbar { display: flex; height: 40px; flex: none; background: linear-gradient(90deg, #1b2630 0, #1c262f 75%, #29262d 90%, #292733 100%); color: #fff; }
.start { display: grid; place-items: center; width: 48px; background: #231d1a; }
.task-search { position: relative; display: flex; align-items: center; width: 288px; padding-left: 11px; border: 1px solid #bfbfbf; background: #f2f2f2; color: #222; font-size: 15px; letter-spacing: -.53px; }
.task-search span { margin-left: 11px; }
.hills { position: absolute; right: 0; bottom: 0; }
.apps-row { display: flex; }
.apps-row div { display: grid; place-items: center; width: 49.2px; }
.apps-row .cop { padding-left: 2px; }
.apps-row .run { background: linear-gradient(#76b9ed, #76b9ed) center bottom / 40px 2px no-repeat; }
.apps-row .cur { width: 48px; background: linear-gradient(#76b9ed, #76b9ed) center bottom / 48px 2px no-repeat #4d535b; }
.tray { display: flex; align-items: center; margin-left: auto; }
.weather { margin-bottom: 4px; }
.temp { margin-left: 7px; letter-spacing: -.46px; }
.haze { margin: 0 24px 0 11px; letter-spacing: -.43px; }
.t2 { margin-left: 10px; }
.t3 { margin-left: 10px; }
.t4 { margin-left: 9px; }
.t5 { margin-left: 11px; }
.clock { width: 60px; margin-left: 9px; text-align: center; font-size: 12px; line-height: 18px; letter-spacing: -.48px; white-space: nowrap; }
.note { position: relative; width: 41px; height: 16px; margin-left: 17px; }
.note b { position: absolute; left: 8px; top: 7px; width: 16px; height: 16px; border: 1px solid #888; border-radius: 50%; background: #2b2b33; font-size: 11px; font-weight: 500; line-height: 14px; text-align: center; }
```
